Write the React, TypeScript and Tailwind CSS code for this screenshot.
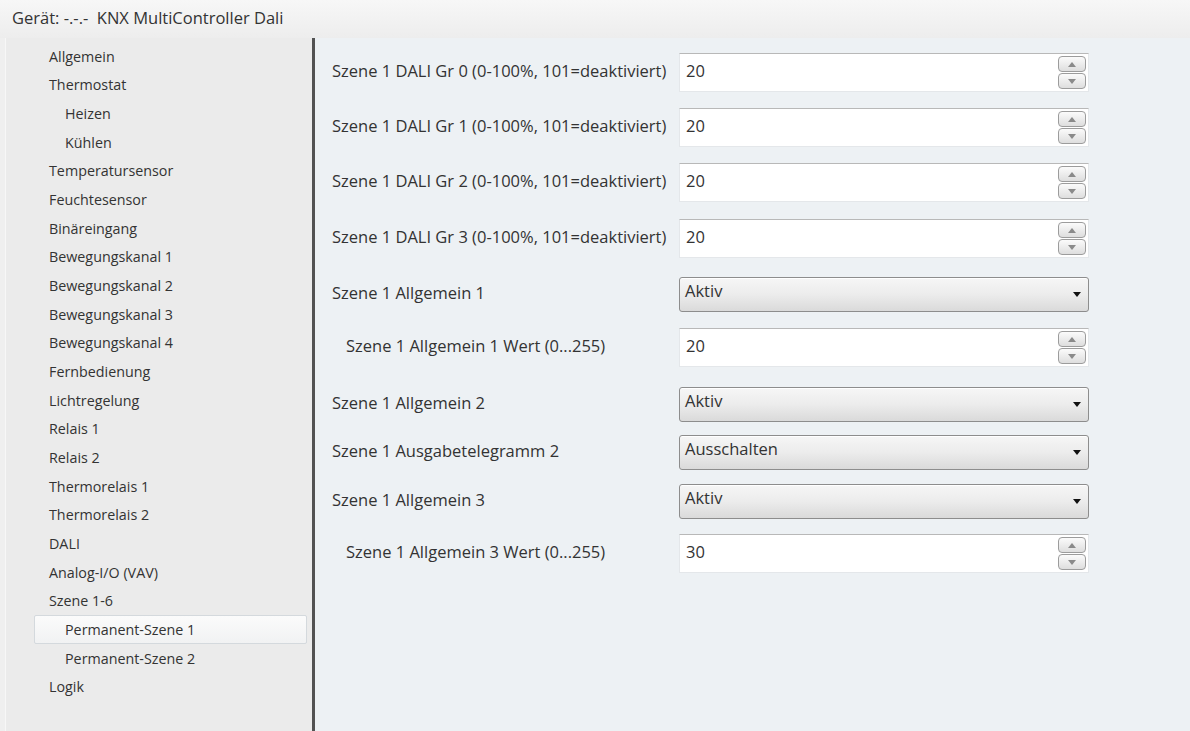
import React from "react";

type TreeItem = { label: string; level: number; selected?: boolean };

const tree: TreeItem[] = [
  { label: "Allgemein", level: 0 },
  { label: "Thermostat", level: 0 },
  { label: "Heizen", level: 1 },
  { label: "Kühlen", level: 1 },
  { label: "Temperatursensor", level: 0 },
  { label: "Feuchtesensor", level: 0 },
  { label: "Binäreingang", level: 0 },
  { label: "Bewegungskanal 1", level: 0 },
  { label: "Bewegungskanal 2", level: 0 },
  { label: "Bewegungskanal 3", level: 0 },
  { label: "Bewegungskanal 4", level: 0 },
  { label: "Fernbedienung", level: 0 },
  { label: "Lichtregelung", level: 0 },
  { label: "Relais 1", level: 0 },
  { label: "Relais 2", level: 0 },
  { label: "Thermorelais 1", level: 0 },
  { label: "Thermorelais 2", level: 0 },
  { label: "DALI", level: 0 },
  { label: "Analog-I/O (VAV)", level: 0 },
  { label: "Szene 1-6", level: 0 },
  { label: "Permanent-Szene 1", level: 1, selected: true },
  { label: "Permanent-Szene 2", level: 1 },
  { label: "Logik", level: 0 },
];

type Param = {
  label: string;
  kind: "number" | "select";
  value: string;
  indent?: boolean;
  gap: string;
};

const params: Param[] = [
  { label: "Szene 1 DALI Gr 0 (0-100%, 101=deaktiviert)", kind: "number", value: "20", gap: "mt-0" },
  { label: "Szene 1 DALI Gr 1 (0-100%, 101=deaktiviert)", kind: "number", value: "20", gap: "mt-[16px]" },
  { label: "Szene 1 DALI Gr 2 (0-100%, 101=deaktiviert)", kind: "number", value: "20", gap: "mt-[16px]" },
  { label: "Szene 1 DALI Gr 3 (0-100%, 101=deaktiviert)", kind: "number", value: "20", gap: "mt-[17px]" },
  { label: "Szene 1 Allgemein 1", kind: "select", value: "Aktiv", gap: "mt-[19px]" },
  { label: "Szene 1 Allgemein 1 Wert (0...255)", kind: "number", value: "20", indent: true, gap: "mt-[16px]" },
  { label: "Szene 1 Allgemein 2", kind: "select", value: "Aktiv", gap: "mt-[20px]" },
  { label: "Szene 1 Ausgabetelegramm 2", kind: "select", value: "Ausschalten", gap: "mt-[13px]" },
  { label: "Szene 1 Allgemein 3", kind: "select", value: "Aktiv", gap: "mt-[14px]" },
  { label: "Szene 1 Allgemein 3 Wert (0...255)", kind: "number", value: "30", indent: true, gap: "mt-[15px]" },
];

const SpinButton = ({ up }: { up?: boolean }) => (
  <div className="w-[28px] h-[16px] rounded-[4px] border border-[#9c9c9c] bg-gradient-to-b from-[#fbfbfb] to-[#dedede] flex items-center justify-center">
    <svg width="8" height="5" viewBox="0 0 8 5">
      {up ? (
        <path d="M0 5 L4 0 L8 5 Z" fill="#8a8a8a" />
      ) : (
        <path d="M0 0 L8 0 L4 5 Z" fill="#8a8a8a" />
      )}
    </svg>
  </div>
);

const NumberField = ({ value }: { value: string }) => (
  <div className="w-[410px] h-[39px] bg-white border-t border-t-[#b8b8b8] border-x border-b border-[#e4e7ea] flex items-center justify-between pl-[6px] pr-[2px]">
    <span className="-mt-[2px]">{value}</span>
    <div className="flex flex-col gap-[1px]">
      <SpinButton up />
      <SpinButton />
    </div>
  </div>
);

const SelectField = ({ value }: { value: string }) => (
  <div className="w-[410px] h-[35px] rounded-[3px] border border-[#8d8d8d] bg-gradient-to-b from-[#f6f6f6] via-[#ececec] to-[#dadada] flex items-center justify-between pl-[5px] pr-[7px] shadow-[inset_0_1px_0_#ffffff]">
    <span className="-mt-[7px]">{value}</span>
    <svg width="8" height="5" viewBox="0 0 8 5">
      <path d="M0 0 L8 0 L4 5 Z" fill="#111" />
    </svg>
  </div>
);

export default function App() {
  return (
    <div
      className="w-[1190px] h-[731px] bg-[#efefef] flex flex-col text-[14px] text-[#333] overflow-hidden"
      style={{ fontFamily: "'Open Sans', 'Noto Sans', sans-serif" }}
    >
      <div className="h-[38px] shrink-0 flex items-center pl-[12px] pb-[2px] bg-gradient-to-b from-[#f7f7f7] to-[#ededed]">
        <span className="text-[16.5px]">Gerät: -.-.-&nbsp; KNX MultiController Dali</span>
      </div>

      <div className="flex-1 flex min-h-0">
        {/* parameter tree */}
        <div className="ml-[5px] w-[307px] bg-[#ebebeb] border-l border-[#f7f7f7] pt-[4px] pr-[5px] text-[14.3px]">
          {tree.map((item) => (
            <div
              key={item.label}
              className={
                "h-[28.68px] flex items-center " +
                (item.level === 0 ? "pl-[43px]" : "pl-[59px]") +
                (item.selected
                  ? " ml-[28px] !pl-[30px] rounded-[2px] border border-[#d4d9dd] bg-gradient-to-b from-[#fbfbfb] to-[#f1f2f3]"
                  : "")
              }
            >
              {item.label}
            </div>
          ))}
        </div>

        <div className="w-[3px] bg-[#525252]" />

        {/* parameter form */}
        <div className="flex-1 bg-[#edf1f4] pl-[17px] pt-[15px] text-[16.5px]">
          {params.map((p) => (
            <div key={p.label} className={"flex items-center " + p.gap}>
              <div className={"w-[347px] -mt-[3px] " + (p.indent ? "pl-[14px]" : "")}>{p.label}</div>
              {p.kind === "number" ? <NumberField value={p.value} /> : <SelectField value={p.value} />}
            </div>
          ))}
        </div>
      </div>
    </div>
  );
}
